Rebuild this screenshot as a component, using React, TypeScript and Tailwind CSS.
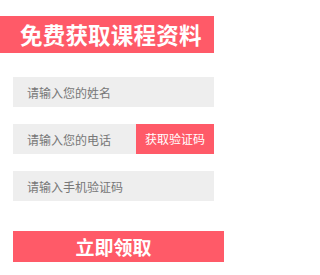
export default function App() {
  return (
    <div className="w-[224px] h-[275px] overflow-hidden bg-white pt-4 font-['Noto_Sans_CJK_SC',sans-serif]">
      {/* header */}
      <div className="w-[214px] h-[37px] bg-[#ff5a68] flex items-center pl-[20px]">
        <h2 className="text-[22.5px] font-bold text-white leading-none tracking-[0.2px] whitespace-nowrap">
          免费获取课程资料
        </h2>
      </div>

      <form className="ml-[13px] mt-[24px] w-[201px] flex flex-col gap-[17px]">
        <input
          className="h-[30px] w-full bg-[#eeeeee] pl-[14px] text-[12px] text-[#777] placeholder:text-[#777] outline-none"
          placeholder="请输入您的姓名"
        />
        <div className="flex h-[30px]">
          <input
            className="h-full w-[123px] bg-[#eeeeee] pl-[14px] text-[12px] text-[#777] placeholder:text-[#777] outline-none"
            placeholder="请输入您的电话"
          />
          <button
            type="button"
            className="h-full flex-1 bg-[#ff5a68] text-white text-[12px] flex items-center justify-center"
          >
            获取验证码
          </button>
        </div>
        <input
          className="h-[30px] w-full bg-[#eeeeee] pl-[14px] text-[12px] text-[#777] placeholder:text-[#777] outline-none"
          placeholder="请输入手机验证码"
        />
      </form>

      <button
        type="button"
        className="ml-[13px] mt-[30px] h-[31px] w-[220px] pr-[19px] bg-[#ff5a68] text-white text-[19px] font-bold flex items-center justify-center leading-none"
      >
        立即领取
      </button>
    </div>
  );
}
